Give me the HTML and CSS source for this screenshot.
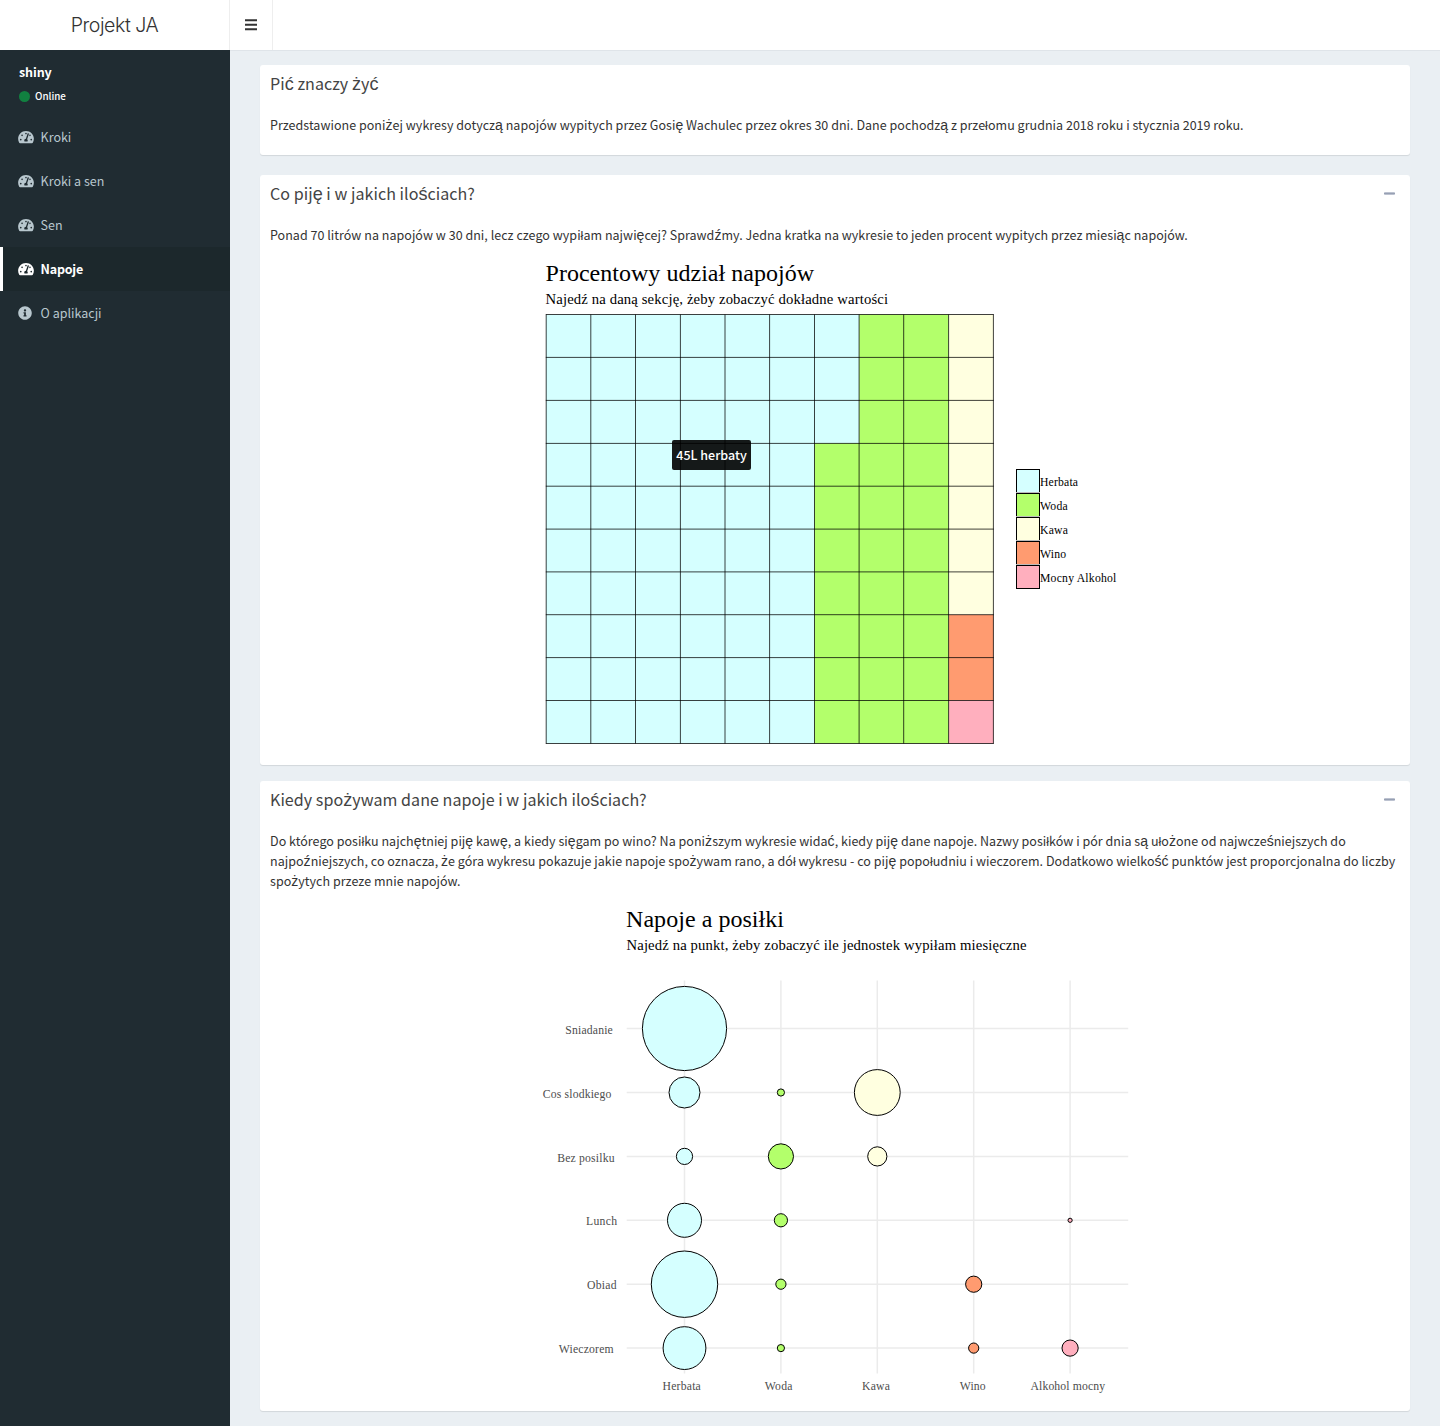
FILE: index.html
```html
<!DOCTYPE html>
<html lang="pl">
<head>
<meta charset="utf-8">
<title>Projekt JA</title>
<link rel="stylesheet" href="styles.css">
</head>
<body>
<svg class="defs" aria-hidden="true">
  <symbol id="gauge" viewBox="0 0 576 512"><path d="M288 32C128.94 32 0 160.94 0 320c0 52.8 14.25 102.26 39.06 144.8 5.61 9.62 16.3 15.2 27.44 15.2h443c11.14 0 21.83-5.58 27.44-15.2C561.75 422.26 576 372.8 576 320c0-159.06-128.94-288-288-288zm0 64c14.71 0 26.58 10.13 30.32 23.65-1.11 2.26-2.64 4.23-3.45 6.67l-9.22 27.67c-5.13 3.49-10.97 6.01-17.64 6.01-17.67 0-32-14.33-32-32S270.33 96 288 96zM96 384c-17.67 0-32-14.33-32-32s14.33-32 32-32 32 14.33 32 32-14.33 32-32 32zm48-160c-17.67 0-32-14.33-32-32s14.33-32 32-32 32 14.33 32 32-14.33 32-32 32zm246.77-72.41l-61.33 184C343.13 347.33 352 364.54 352 384c0 11.72-3.38 22.55-8.88 32H232.88c-5.5-9.45-8.88-20.28-8.88-32 0-33.94 26.5-61.43 59.9-63.59l61.34-184.01c4.17-12.56 17.73-19.45 30.36-15.17 12.57 4.19 19.35 17.79 15.17 30.36zm14.66 57.2l15.52-46.55c3.47-1.29 7.13-2.23 11.05-2.23 17.67 0 32 14.33 32 32s-14.33 32-32 32c-11.38-.01-20.89-6.28-26.57-15.22zM480 384c-17.67 0-32-14.33-32-32s14.33-32 32-32 32 14.33 32 32-14.33 32-32 32z"/></symbol>
  <symbol id="info" viewBox="0 0 512 512"><path d="M256 8C119.043 8 8 119.083 8 256c0 136.997 111.043 248 248 248s248-111.003 248-248C504 119.083 392.957 8 256 8zm0 110c23.196 0 42 18.804 42 42s-18.804 42-42 42-42-18.804-42-42 18.804-42 42-42zm56 254c0 6.627-5.373 12-12 12h-88c-6.627 0-12-5.373-12-12v-24c0-6.627 5.373-12 12-12h12v-64h-12c-6.627 0-12-5.373-12-12v-24c0-6.627 5.373-12 12-12h64c6.627 0 12 5.373 12 12v100h12c6.627 0 12 5.373 12 12v24z"/></symbol>
</svg>
<header class="header">
  <div class="logo">Projekt JA</div>
  <button class="toggle" aria-label="Menu"><svg width="12" height="12" viewBox="0 0 12 12"><path d="M0 0.2h12v2H0zM0 4.7h12v2H0zM0 9.2h12v2H0z"/></svg></button>
</header>
<div class="layout">
  <aside class="sidebar">
    <div class="user">
      <p class="name">shiny</p>
      <p class="status"><i class="dot"></i><span>Online</span></p>
    </div>
    <nav class="menu">
      <a class="item"><svg class="icon"><use href="#gauge"/></svg><span>Kroki</span></a>
      <a class="item"><svg class="icon"><use href="#gauge"/></svg><span>Kroki a sen</span></a>
      <a class="item"><svg class="icon"><use href="#gauge"/></svg><span>Sen</span></a>
      <a class="item active"><svg class="icon"><use href="#gauge"/></svg><span>Napoje</span></a>
      <a class="item"><svg class="icon info"><use href="#info"/></svg><span>O aplikacji</span></a>
    </nav>
  </aside>
  <main class="content">
    <section class="box intro">
      <h3 class="title">Pi<i>ć</i> znaczy <i>ż</i>y<i>ć</i></h3>
      <p class="text">Przedstawione poni<i>ż</i>ej wykresy dotycz<i>ą</i> napojów wypitych przez Gosi<i>ę</i> Wachulec przez okres 30 dni. Dane pochodz<i>ą</i> z przełomu grudnia 2018 roku i stycznia 2019 roku.</p>
    </section>
    <section class="box shares">
      <div class="head"><h3 class="title">Co pij<i>ę</i> i w jakich ilo<i>ś</i>ciach?</h3><div class="minus"></div></div>
      <p class="text">Ponad 70 litrów na napojów w 30 dni, lecz czego wypiłam najwi<i>ę</i>cej? Sprawd<i>ź</i>my. Jedna kratka na wykresie to jeden procent wypitych przez miesi<i>ą</i>c napojów.</p>
      <div class="chart">
        <svg width="1130" height="505" viewBox="270 250 1130 505">
          <text class="t1" x="545.5" y="281" textLength="268.5">Procentowy udział napojów</text>
          <text class="t2" x="545.5" y="304" textLength="342.5">Najedź na daną sekcję, żeby zobaczyć dokładne wartości</text>
          <path class="tea" d="M546 314.5h313.2v128.7h-44.7v300.3H546z"/>
          <path class="water" d="M859.2 314.5h89.5v429H814.5V443.2h44.7z"/>
          <path class="coffee" d="M948.7 314.5h44.8v300.3h-44.8z"/>
          <path class="wine" d="M948.7 614.8h44.8v85.8h-44.8z"/>
          <path class="spirit" d="M948.7 700.6h44.8v42.9h-44.8z"/>
          <path class="grid" d="M546.2 314.5v429M590.8 314.5v429M635.5 314.5v429M680.4 314.5v429M725 314.5v429M769.6 314.5v429M814.5 314.5v429M859.1 314.5v429M903.7 314.5v429M948.6 314.5v429M993.4 314.5v429M545.8 314.5h448M545.8 357.4h448M545.8 400.4h448M545.8 443.4h448M545.8 486.2h448M545.8 529.1h448M545.8 571.9h448M545.8 614.7h448M545.8 657.6h448M545.8 700.5h448M545.8 743.5h448"/>
          <g class="keys">
            <rect class="tea" x="1016.5" y="469.5" width="23" height="24"/>
            <rect class="water" x="1016.5" y="493.5" width="23" height="24"/>
            <rect class="coffee" x="1016.5" y="517.5" width="23" height="24"/>
            <rect class="wine" x="1016.5" y="541.5" width="23" height="24"/>
            <rect class="spirit" x="1016.5" y="565.5" width="23" height="23"/>
          </g>
          <path class="gap" d="M1016 492.5h24M1016 516.5h24M1016 540.5h24M1016 564.5h24"/>
          <g class="legend">
            <text x="1040" y="486" textLength="38">Herbata</text>
            <text x="1040" y="510" textLength="27.7">Woda</text>
            <text x="1040" y="534" textLength="28">Kawa</text>
            <text x="1040" y="558" textLength="26">Wino</text>
            <text x="1040" y="582" textLength="76.3">Mocny Alkohol</text>
          </g>
        </svg>
        <div class="tip">45L herbaty</div>
      </div>
    </section>
    <section class="box meals">
      <div class="head"><h3 class="title">Kiedy spo<i>ż</i>ywam dane napoje i w jakich ilo<i>ś</i>ciach?</h3><div class="minus"></div></div>
      <p class="text">Do którego posiłku najch<i>ę</i>tniej pij<i>ę</i> kaw<i>ę</i>, a kiedy si<i>ę</i>gam po wino? Na poni<i>ż</i>szym wykresie wida<i>ć</i>, kiedy pij<i>ę</i> dane napoje. Nazwy posiłków i pór dnia s<i>ą</i> uło<i>ż</i>one od najwcze<i>ś</i>niejszych do<br>najpo<i>ź</i>niejszych, co oznacza, <i>ż</i>e góra wykresu pokazuje jakie napoje spo<i>ż</i>ywam rano, a dół wykresu - co pij<i>ę</i> popołudniu i wieczorem. Dodatkowo wielko<i>ść</i> punktów jest proporcjonalna do liczby<br>spo<i>ż</i>ytych przeze mnie napojów.</p>
      <div class="chart">
        <svg width="1130" height="505" viewBox="270 896 1130 505">
          <text class="t1" x="626" y="927" textLength="158">Napoje a posiłki</text>
          <text class="t2" x="626.5" y="950" textLength="400">Najedź na punkt, żeby zobaczyć ile jednostek wypiłam miesięczne</text>
          <path class="rules" d="M626.7 1028.5h501.5M626.7 1092.5h501.5M626.7 1156.4h501.5M626.7 1220.3h501.5M626.7 1284.2h501.5M626.7 1348.1h501.5M684.5 980.5v393M780.9 980.5v393M877.3 980.5v393M973.7 980.5v393M1070.1 980.5v393"/>
          <g class="bubbles">
            <circle class="tea" cx="684.5" cy="1028.5" r="42.1"/>
            <circle class="tea" cx="684.5" cy="1092.5" r="15.5"/>
            <circle class="water" cx="780.9" cy="1092.5" r="3.6"/>
            <circle class="coffee" cx="877.3" cy="1092.5" r="22.9"/>
            <circle class="tea" cx="684.5" cy="1156.4" r="8.1"/>
            <circle class="water" cx="780.9" cy="1156.4" r="12.6"/>
            <circle class="coffee" cx="877.3" cy="1156.4" r="9.6"/>
            <circle class="tea" cx="684.5" cy="1220.3" r="17"/>
            <circle class="water" cx="780.9" cy="1220.3" r="6.6"/>
            <circle class="spirit" cx="1070.1" cy="1220.3" r="2.1"/>
            <circle class="tea" cx="684.5" cy="1284.2" r="33.2"/>
            <circle class="water" cx="780.9" cy="1284.2" r="5.1"/>
            <circle class="wine" cx="973.7" cy="1284.2" r="8.1"/>
            <circle class="tea" cx="684.5" cy="1348.1" r="21.4"/>
            <circle class="water" cx="780.9" cy="1348.1" r="3.6"/>
            <circle class="wine" cx="973.7" cy="1348.1" r="5.1"/>
            <circle class="spirit" cx="1070.1" cy="1348.1" r="8.1"/>
          </g>
          <g class="axis">
            <text x="565.3" y="1034" textLength="47.5">Sniadanie</text>
            <text x="542.7" y="1098" textLength="68.6">Cos slodkiego</text>
            <text x="557.3" y="1162" textLength="57.2">Bez posilku</text>
            <text x="586" y="1225" textLength="31">Lunch</text>
            <text x="587" y="1289" textLength="29.5">Obiad</text>
            <text x="558.7" y="1353" textLength="55">Wieczorem</text>
            <text x="662.5" y="1390" textLength="38.3">Herbata</text>
            <text x="764.7" y="1390" textLength="27.7">Woda</text>
            <text x="862" y="1390" textLength="28">Kawa</text>
            <text x="959.7" y="1390" textLength="26">Wino</text>
            <text x="1030.5" y="1390" textLength="74.5">Alkohol mocny</text>
          </g>
        </svg>
      </div>
    </section>
  </main>
</div>
</body>
</html>
```
FILE: styles.css
```css
* { box-sizing: border-box; }
body { margin: 0; background: #202c32; color: #333; font: 12.5px/20px "Noto Sans CJK JP", "Liberation Sans", sans-serif; }
p, h3 { margin: 0; font-weight: 400; }
.defs { display: none; }
.header { display: flex; height: 50px; background: #fff; }
.logo { width: 230px; border-right: 1px solid #eee; text-align: center; color: #333; font: 300 19.6px/51px Inter, "Liberation Sans", sans-serif; letter-spacing: -.45px; }
.toggle { width: 43px; padding: 0; border: 0; border-right: 1px solid #eee; background: none; display: flex; align-items: center; justify-content: center; }
.toggle path { fill: #333; }
.layout { display: flex; height: 1376px; }
.sidebar { width: 230px; color: #fff; }
.user { height: 65px; padding: 12px 19px; }
.name { font-weight: 700; line-height: 20px; letter-spacing: -.1px; }
.status { display: flex; align-items: center; gap: 5px; margin-top: 5px; font-size: 9.8px; font-weight: 500; line-height: 18px; }
.dot { width: 11px; height: 11px; border-radius: 50%; background: #118040; }
.item { display: flex; align-items: center; height: 44px; padding-left: 15px; border-left: 3px solid transparent; color: #b8c7ce; }
.active { background: #1c282c; border-color: #fff; color: #fff; font-weight: 700; letter-spacing: -.22px; }
.item span { margin-left: -.4px; }
.icon { width: 16px; height: 14px; margin-right: 7px; fill: currentColor; }
.info { width: 14px; margin-right: 9px; }
.content { flex: 1; padding: 15px 30px; background: #eaeff3; box-shadow: inset 0 1px #dfe4e9; }
.box { background: #fff; border-radius: 3px; box-shadow: 0 1px 1px rgba(0,0,0,.1); padding: 0 10px; overflow: hidden; }
.intro { height: 90px; margin-bottom: 20px; }
.shares { height: 590px; margin-bottom: 16px; }
.meals { height: 630px; }
.head { display: flex; justify-content: space-between; }
.title { height: 40px; padding-top: 8px; color: #444; font-size: 16.07px; line-height: 20px; letter-spacing: .04px; white-space: nowrap; }
.text { padding-top: 10px; letter-spacing: .028px; white-space: nowrap; }
/* accented letters outside the main face */
.title i, .text i { font: normal 1.125em/1px "Liberation Sans", sans-serif; }
.minus { width: 11px; height: 3px; margin: 17px 5px 0 0; background: linear-gradient(#bcc2d0 1px, #97a0b3 1px 2px, #bcc2d0 2px); border-radius: 1px; }
.chart { position: relative; margin-top: 5px; }
.chart svg { display: block; font-family: "Liberation Serif", serif; }
.t1 { font-size: 24px; }
.t2 { font-size: 14.7px; }
.legend, .axis { font-size: 11.7px; }
.axis { fill: #4d4d4d; }
.tea { fill: #d5ffff; }
.water { fill: #b3ff6b; }
.coffee { fill: #ffffe0; }
.wine { fill: #ff9b70; }
.spirit { fill: #ffafbe; }
.grid { stroke: #000; stroke-width: .75; }
.keys rect { stroke: #000; stroke-width: 1; }
.gap { stroke: #bbb; }
.rules { stroke: #ebebeb; stroke-width: 1.5; }
.bubbles circle { stroke: #000; stroke-width: 1; }
.tip { position: absolute; left: 402px; top: 190px; width: 79px; height: 30px; border-radius: 2px; background: rgba(0,0,0,.9); color: #fff; font-weight: 500; line-height: 30px; text-align: center; }
```
